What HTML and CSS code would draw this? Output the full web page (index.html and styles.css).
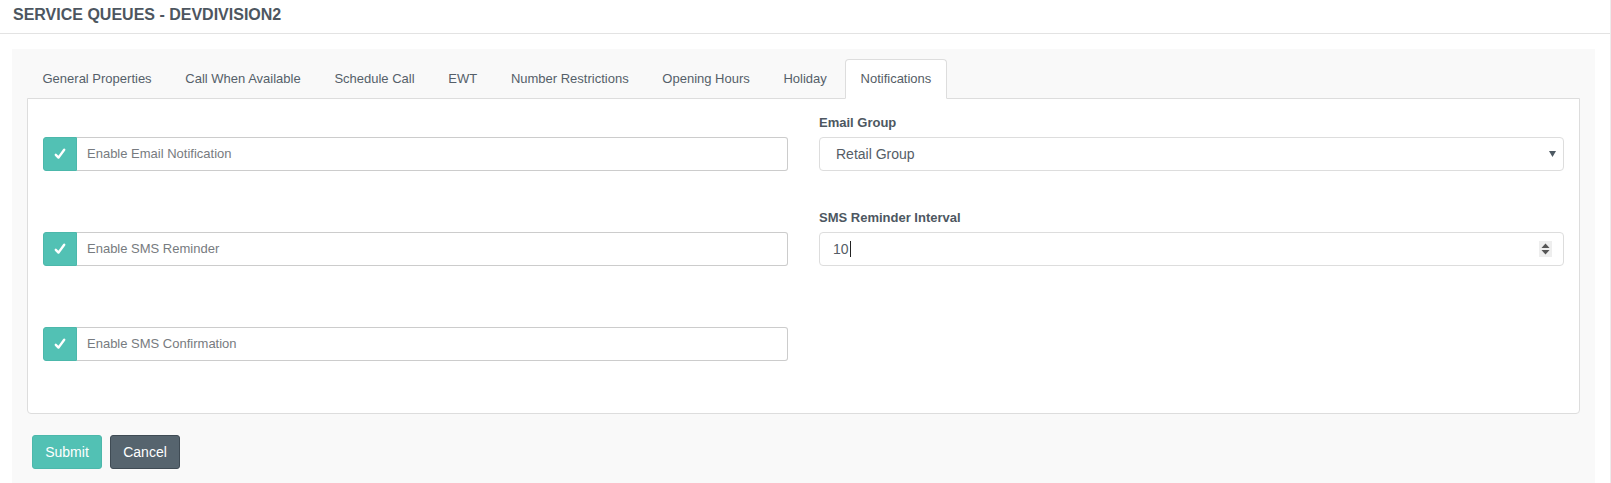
FILE: index.html
```html
<!DOCTYPE html>
<html lang="en">
<head>
<meta charset="utf-8">
<title>Service Queues - DEVDIVISION2</title>
<link rel="stylesheet" href="styles.css">
</head>
<body>
<div class="page">
  <header class="page-header">
    <h1 class="page-title">SERVICE QUEUES - DEVDIVISION2</h1>
  </header>
  <div class="panel">
    <ul class="tabs">
      <li class="tab">General Properties</li>
      <li class="tab">Call When Available</li>
      <li class="tab">Schedule Call</li>
      <li class="tab">EWT</li>
      <li class="tab">Number Restrictions</li>
      <li class="tab">Opening Hours</li>
      <li class="tab">Holiday</li>
      <li class="tab tab-active">Notifications</li>
    </ul>
    <div class="tab-content">
      <div class="form-row">
        <div class="cell cell-check">
          <div class="check-field">
            <span class="check-addon"><svg width="12" height="12" viewBox="0 0 12 12"><path d="M1.8 6.8 L4.5 9.6 L10.2 1.8" fill="none" stroke="#fff" stroke-width="2.4" stroke-linecap="round" stroke-linejoin="round"/></svg></span>
            <span class="check-label">Enable Email Notification</span>
          </div>
        </div>
        <div class="cell">
          <label class="field-label">Email Group</label>
          <div class="control control-select">
            <span class="control-value">Retail Group</span>
            <svg class="select-arrow" width="7" height="6" viewBox="0 0 7 6"><path d="M0 0 H7 L3.5 6 Z" fill="#4e5a63"/></svg>
          </div>
        </div>
      </div>
      <div class="form-row">
        <div class="cell cell-check">
          <div class="check-field">
            <span class="check-addon"><svg width="12" height="12" viewBox="0 0 12 12"><path d="M1.8 6.8 L4.5 9.6 L10.2 1.8" fill="none" stroke="#fff" stroke-width="2.4" stroke-linecap="round" stroke-linejoin="round"/></svg></span>
            <span class="check-label">Enable SMS Reminder</span>
          </div>
        </div>
        <div class="cell">
          <label class="field-label">SMS Reminder Interval</label>
          <div class="control control-number">
            <span class="control-value">10<span class="caret"></span></span>
            <span class="spinner"><svg width="13" height="16" viewBox="0 0 13 16"><path d="M2.5 7 L6.5 2.5 L10.5 7 Z" fill="#555"/><path d="M2.5 9 L6.5 13.5 L10.5 9 Z" fill="#555"/></svg></span>
          </div>
        </div>
      </div>
      <div class="form-row">
        <div class="cell cell-check">
          <div class="check-field">
            <span class="check-addon"><svg width="12" height="12" viewBox="0 0 12 12"><path d="M1.8 6.8 L4.5 9.6 L10.2 1.8" fill="none" stroke="#fff" stroke-width="2.4" stroke-linecap="round" stroke-linejoin="round"/></svg></span>
            <span class="check-label">Enable SMS Confirmation</span>
          </div>
        </div>
        <div class="cell"></div>
      </div>
    </div>
    <div class="actions">
      <button class="btn btn-submit" type="button">Submit</button>
      <button class="btn btn-cancel" type="button">Cancel</button>
    </div>
  </div>
</div>
</body>
</html>
```
FILE: styles.css
```css
* { box-sizing: border-box; }
html, body { margin: 0; padding: 0; background: #fff; }
body {
  font-family: "Liberation Sans", Arial, sans-serif;
  font-size: 13px;
  color: #555d66;
}
.page {
  height: 483px;
  overflow: hidden;
  border-right: 1px solid #ececec;
  display: flex;
  flex-direction: column;
}
.page-header {
  height: 34px;
  border-bottom: 1px solid #e3e3e3;
  padding-left: 13px;
  display: flex;
  align-items: center;
  flex-shrink: 0;
}
.page-title {
  margin: 0;
  font-size: 16px;
  font-weight: bold;
  color: #4d5660;
  line-height: 20px;
  padding-bottom: 3px;
}
.panel {
  margin: 15px 15px 0 12px;
  background: #f9f9f9;
  padding: 10px 15px 14px;
  flex: 1;
}
.tabs {
  list-style: none;
  margin: 0;
  padding: 0;
  display: flex;
  height: 39px;
}
.tab {
  position: relative;
  z-index: 1;
  padding: 10px 15px 11px;
  line-height: 17px;
  margin-right: 1.7px;
  border: 1px solid transparent;
  border-radius: 4px 4px 0 0;
  color: #555f69;
  height: 40px;
}
.tab:first-child { margin-left: -0.5px; }
.tab-active {
  background: #fff;
  border-color: #dddddd;
  border-bottom-color: #fff;
  color: #555d66;
}
.tab-content {
  background: #fff;
  border: 1px solid #dddddd;
  border-radius: 0 0 4px 4px;
  padding: 14px 15px 15px;
}
.form-row {
  display: grid;
  grid-template-columns: 1fr 1fr;
  column-gap: 31px;
  height: 95px;
}
.cell-check { padding-top: 24px; }
.field-label {
  display: block;
  font-weight: bold;
  font-size: 13px;
  line-height: 19px;
  margin-bottom: 5px;
  color: #4d5761;
}
.check-field {
  display: flex;
  height: 34px;
}
.check-addon {
  width: 34px;
  background: #52c1b4;
  border: 1px solid #4cb8ab;
  border-radius: 3px 0 0 3px;
  display: flex;
  align-items: center;
  justify-content: center;
  flex-shrink: 0;
}
.check-label {
  flex: 1;
  border: 1px solid #cccccc;
  border-left: none;
  border-radius: 0 3px 3px 0;
  padding-left: 10px;
  padding-bottom: 1px;
  display: flex;
  align-items: center;
  color: #777b80;
  font-size: 13px;
}
.control {
  height: 34px;
  border: 1px solid #dddddd;
  border-radius: 4px;
  display: flex;
  align-items: center;
  justify-content: space-between;
  padding: 0 7px 0 16px;
  font-size: 14px;
  color: #555d66;
}
.control-number { padding: 0 11px 0 13px; }
.control-value { display: flex; align-items: center; }
.caret {
  display: inline-block;
  width: 1px;
  height: 16px;
  background: #222;
  margin-left: 1px;
}
.select-arrow { display: block; }
.spinner {
  display: flex;
  background: #eeeeee;
  width: 13px;
  height: 16px;
}
.actions {
  display: flex;
  gap: 8px;
  margin-top: 21px;
  padding-left: 5px;
}
.btn {
  font-family: "Liberation Sans", Arial, sans-serif;
  font-size: 14px;
  color: #fff;
  height: 34px;
  width: 70px;
  border-radius: 3px;
  padding: 0;
  cursor: pointer;
}
.btn-submit {
  background: #52c1b4;
  border: 1px solid #4cb8ab;
}
.btn-cancel {
  background: #56646e;
  border: 1px solid #3f4b54;
}
```
